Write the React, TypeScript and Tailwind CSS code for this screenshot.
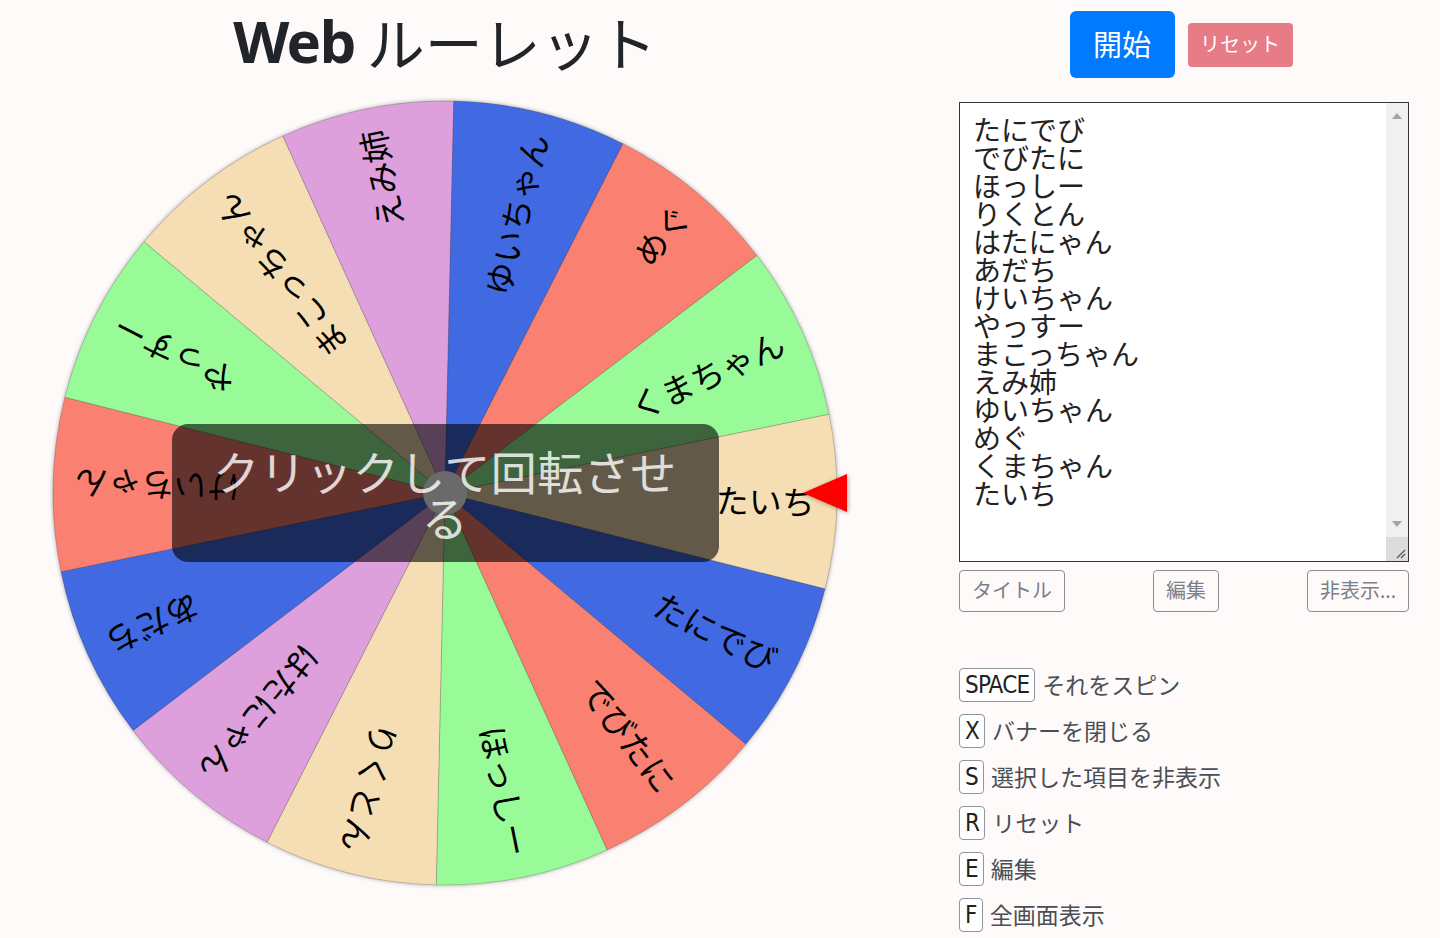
import React from "react";

const names = [
  "たにでび",
  "でびたに",
  "ほっしー",
  "りくとん",
  "はたにゃん",
  "あだち",
  "けいちゃん",
  "やっすー",
  "まこっちゃん",
  "えみ姉",
  "ゆいちゃん",
  "めぐ",
  "くまちゃん",
  "たいち",
];

const palette = ["#4169e1", "#fa8072", "#98fb98", "#f5deb3", "#dda0dd"];

const shortcuts = [
  { key: "SPACE", label: "それをスピン" },
  { key: "X", label: "バナーを閉じる" },
  { key: "S", label: "選択した項目を非表示" },
  { key: "R", label: "リセット" },
  { key: "E", label: "編集" },
  { key: "F", label: "全画面表示" },
];

const jp = '"Noto Sans", "Noto Sans CJK JP", sans-serif';

function Wheel() {
  const cx = 445;
  const cy = 400;
  const r = 392;
  const step = 360 / names.length;
  const start = 27 - step / 2;
  const rad = (d: number) => (d * Math.PI) / 180;

  return (
    <svg width={890} height={800} viewBox="0 0 890 800" className="block">
      <g style={{ filter: "drop-shadow(0 0 2px rgba(0,0,0,0.35))" }}>
        {names.map((name, i) => {
          const a0 = start + i * step;
          const a1 = a0 + step;
          const x0 = cx + r * Math.cos(rad(a0));
          const y0 = cy + r * Math.sin(rad(a0));
          const x1 = cx + r * Math.cos(rad(a1));
          const y1 = cy + r * Math.sin(rad(a1));
          return (
            <path
              key={name}
              d={`M${cx} ${cy} L${x0} ${y0} A${r} ${r} 0 0 1 ${x1} ${y1} Z`}
              fill={palette[i % palette.length]}
              stroke="rgba(0,0,0,0.22)"
              strokeWidth={0.8}
            />
          );
        })}
      </g>
      {names.map((name, i) => {
        const mid = start + i * step + step / 2;
        return (
          <g key={name} transform={`rotate(${mid} ${cx} ${cy})`}>
            <text
              x={cx + 370}
              y={cy}
              textAnchor="end"
              dominantBaseline="central"
              fontSize={33}
              fontFamily='"Noto Sans CJK JP", sans-serif'
              fill="#000"
            >
              {name}
            </text>
          </g>
        );
      })}
      <polygon
        points="803,400 847,381 847,419"
        fill="#ff0000"
        style={{ filter: "drop-shadow(1px 1px 2px rgba(0,0,0,0.35))" }}
      />
    </svg>
  );
}

function FakeScrollbar() {
  return (
    <div className="flex w-[22px] shrink-0 flex-col bg-[#f0f0f0]">
      <div className="flex h-[26px] items-center justify-center">
        <div className="h-0 w-0 border-x-[5px] border-b-[6px] border-x-transparent border-b-[#a3a3a3]" />
      </div>
      <div className="flex-1" />
      <div className="flex h-[26px] items-center justify-center">
        <div className="h-0 w-0 border-x-[5px] border-t-[6px] border-x-transparent border-t-[#a3a3a3]" />
      </div>
      <div className="flex h-[24px] items-end justify-end bg-[#dcdcdc] p-[2px]">
        <svg width="12" height="12" viewBox="0 0 12 12">
          <path d="M11 3 L3 11 M11 7 L7 11" stroke="#555" strokeWidth="1.2" />
        </svg>
      </div>
    </div>
  );
}

export default function App() {
  return (
    <div className="min-h-screen bg-[#fffafa] text-[#212529]" style={{ fontFamily: jp }}>
      <div className="flex">
        <div className="w-[890px] shrink-0">
          <h1 className="flex h-[93px] items-start justify-center pt-[6px] text-[58px] leading-[70px]">
            <span className="font-bold tracking-[-1.5px]">Web</span>
            <span className="ml-[12px] font-normal" style={{ fontFamily: '"Noto Sans CJK JP", sans-serif' }}>
              ルーレット
            </span>
          </h1>
          <div className="relative">
            <Wheel />
            <div className="absolute inset-0 flex items-center justify-center">
              <div className="relative flex h-[138px] w-[547px] items-center justify-center rounded-[16px] bg-black/60 px-[32px] text-center">
                <div className="absolute left-1/2 top-1/2 h-[44px] w-[44px] -translate-x-1/2 -translate-y-1/2 rounded-full bg-[#6a6a6a]" />
                <p
                  className="relative text-[46px] leading-[46px] tracking-[0.5px] text-white/80"
                  style={{ fontFamily: '"Noto Sans CJK JP", sans-serif' }}
                >
                  クリックして回転させる
                </p>
              </div>
            </div>
          </div>
        </div>

        <div className="ml-[69px] w-[450px] shrink-0">
          <div className="flex items-center justify-center gap-[13px] pr-[6px] pt-[11px]">
            <button
              type="button"
              className="flex h-[67px] w-[105px] items-center justify-center rounded-[6px] bg-[#007bff] text-[29px] text-white"
            >
              開始
            </button>
            <button
              type="button"
              className="flex h-[44px] w-[105px] items-center justify-center rounded-[4px] bg-[#e77c86] text-[20px] text-white"
            >
              リセット
            </button>
          </div>

          <div className="mt-[24px] flex h-[460px] w-[450px] border border-[#333] bg-white">
            <textarea
              readOnly
              value={names.join("\n")}
              className="block h-full min-w-0 flex-1 resize-none overflow-hidden bg-white px-[13px] py-[12px] text-[28px] leading-[28px] text-[#222] outline-none"
              style={{ fontFamily: '"Noto Sans CJK JP", sans-serif' }}
            />
            <FakeScrollbar />
          </div>

          <div className="mt-[8px] flex justify-between">
            {["タイトル", "編集", "非表示..."].map((t) => (
              <button
                key={t}
                type="button"
                className="h-[42px] rounded-[4px] border border-[#8a9097] px-[12px] text-[20px] leading-[30px] text-[#7a8087]"
              >
                {t}
              </button>
            ))}
          </div>

          <ul className="mt-[56px] flex flex-col gap-[12px]">
            {shortcuts.map((s) => (
              <li key={s.key} className="flex h-[34px] items-center">
                <kbd
                  className="flex h-[34px] items-center rounded-[4px] border border-[#8f959b] bg-white px-[5px] text-[24px] tracking-[-0.8px] text-[#222]"
                  style={{ fontFamily: '"DejaVu Sans Condensed", sans-serif', fontStretch: "condensed" }}
                >
                  {s.key}
                </kbd>
                <span className="ml-[7px] text-[23px] text-[#4a4f55]">{s.label}</span>
              </li>
            ))}
          </ul>
        </div>
      </div>
    </div>
  );
}
